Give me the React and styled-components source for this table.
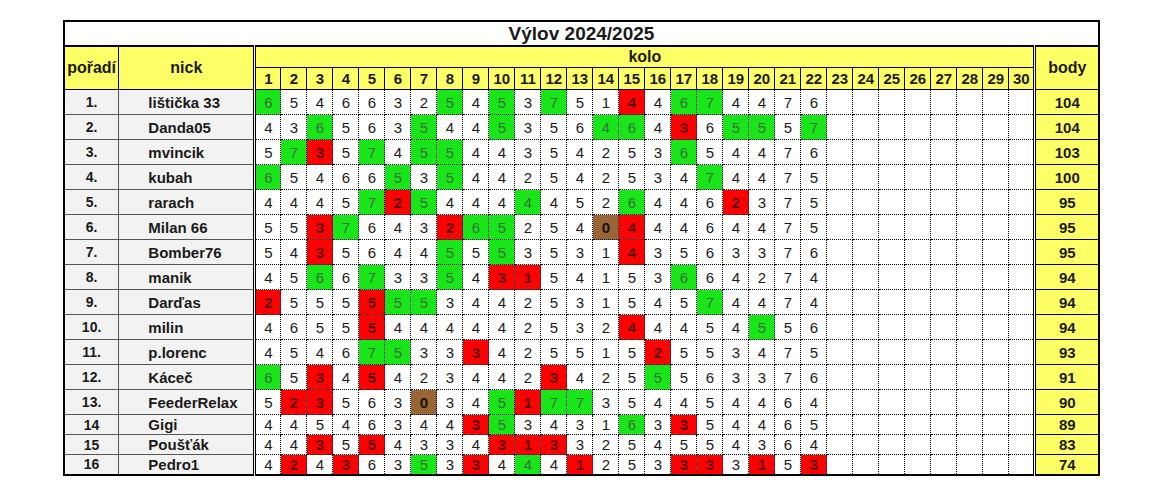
import styled, { createGlobalStyle } from "styled-components";

const GlobalStyle = createGlobalStyle`
  body {
    margin: 0;
    background: #ffffff;
    font-family: "Liberation Sans", Arial, sans-serif;
  }
`

const Page = styled.div`
  padding-top: 20px;
  display: flex;
  justify-content: center;
`
const Table = styled.table`
  width: 1036px;
  table-layout: fixed;
  border-collapse: collapse;
  border: 2px solid #000;
  color: #1a1a1a;
`
const TitleCell = styled.th`
  height: 23px;
  padding: 0;
  font-size: 19px;
  font-weight: bold;
  text-align: center;
  border-bottom: 2px solid #000;
  background: #fff;
`
const HeadCell = styled.th`
  padding: 0;
  background: #ffff66;
  font-size: 16px;
  font-weight: bold;
  border: 1px solid #000;
  border-left: ${(p) => (p.$double ? "3px double #000" : "1px solid #000")};
  border-right: ${(p) => (p.$doubleRight ? "3px double #000" : "1px solid #000")};
  vertical-align: middle;
`
const KoloCell = styled.th`
  height: 20px;
  padding: 0;
  background: #ffff66;
  font-size: 16px;
  font-weight: bold;
  border-bottom: 1px solid #000;
  line-height: 20px;
`
const NumHead = styled.th`
  height: 21px;
  padding: 0;
  background: #ffff66;
  font-size: 15px;
  font-weight: bold;
  border: 1px solid #000;
`
const Row = styled.tr`
  height: ${(p) => (p.$compact ? "20px" : "25px")};
`
const RankCell = styled.td`
  padding: 0;
  background: #f2f2f2;
  font-size: 14px;
  font-weight: bold;
  text-align: center;
  border: 1px solid #555;
`
const NickCell = styled.td`
  padding: 0 0 0 29px;
  background: #f2f2f2;
  font-size: 15px;
  font-weight: bold;
  text-align: left;
  white-space: nowrap;
  border: 1px solid #555;
  border-right: 3px double #000;
`

const tones = {
  g: { bg: "#19e619", fg: "#3b6b3b", weight: "normal" },
  r: { bg: "#ff0000", fg: "#5a0000", weight: "bold" },
  b: { bg: "#996633", fg: "#111111", weight: "bold" },
}

const RoundCell = styled.td`
  padding: 0;
  font-size: 15px;
  text-align: center;
  border: 1px dotted #000;
  background: ${(p) => (p.$tone ? tones[p.$tone].bg : "#fff")};
  color: ${(p) => (p.$tone ? tones[p.$tone].fg : "#1a1a1a")};
  font-weight: ${(p) => (p.$tone ? tones[p.$tone].weight : "normal")};
`
const PointsCell = styled.td`
  padding: 0;
  background: #ffff66;
  font-size: 15px;
  font-weight: bold;
  text-align: center;
  border: 1px solid #000;
  border-left: 3px double #000;
`

const players = [
  ["1.", "lištička 33", "6g 5 4 6 6 3 2 5g 4 5g 3 7g 5 1 4r 4 6g 7g 4 4 7 6", 104],
  ["2.", "Danda05", "4 3 6g 5 6 3 5g 4 4 5g 3 5 6 4g 6g 4 3r 6 5g 5g 5 7g", 104],
  ["3.", "mvincik", "5 7g 3r 5 7g 4 5g 5g 4 4 3 5 4 2 5 3 6g 5 4 4 7 6", 103],
  ["4.", "kubah", "6g 5 4 6 6 5g 3 5g 4 4 2 5 4 2 5 3 4 7g 4 4 7 5", 100],
  ["5.", "rarach", "4 4 4 5 7g 2r 5g 4 4 4 4g 4 5 2 6g 4 4 6 2r 3 7 5", 95],
  ["6.", "Milan 66", "5 5 3r 7g 6 4 3 2r 6g 5g 2 5 4 0b 4r 4 4 6 4 4 7 5", 95],
  ["7.", "Bomber76", "5 4 3r 5 6 4 4 5g 5 5g 3 5 3 1 4r 3 5 6 3 3 7 6", 95],
  ["8.", "manik", "4 5 6g 6 7g 3 3 5g 4 3r 1r 5 4 1 5 3 6g 6 4 2 7 4", 94],
  ["9.", "Darďas", "2r 5 5 5 5r 5g 5g 3 4 4 2 5 3 1 5 4 5 7g 4 4 7 4", 94],
  ["10.", "milin", "4 6 5 5 5r 4 4 4 4 4 2 5 3 2 4r 4 4 5 4 5g 5 6", 94],
  ["11.", "p.lorenc", "4 5 4 6 7g 5g 3 3 3r 4 2 5 5 1 5 2r 5 5 3 4 7 5", 93],
  ["12.", "Káceč", "6g 5 3r 4 5r 4 2 3 4 4 2 3r 4 2 5 5g 5 6 3 3 7 6", 91],
  ["13.", "FeederRelax", "5 2r 3r 5 6 3 0b 3 4 5g 1r 7g 7g 3 5 4 4 5 4 4 6 4", 90],
  ["14", "Gigi", "4 4 5 4 6 3 4 4 3r 5g 3 4 3 1 6g 3 3r 5 4 4 6 5", 89],
  ["15", "Poušťák", "4 4 3r 5 5r 4 3 3 4 3r 1r 3r 3 2 5 4 5 5 4 3 6 4", 83],
  ["16", "Pedro1", "4 2r 4 3r 6 3 5g 3 3r 4 4g 4 1r 2 5 3 3r 3r 3 1r 5 3r", 74],
]

const ROUNDS = 30
const rounds = Array.from({ length: ROUNDS }, (_, i) => i + 1)

function parseScores(text) {
  const cells = text.split(" ").map((s) => ({ value: s[0], tone: s[1] }))
  while (cells.length < ROUNDS) cells.push({ value: "", tone: undefined })
  return cells
}

function App() {
  return (
    <>
      <GlobalStyle />
      <Page>
        <Table>
          <colgroup>
            <col style={{ width: 55 }} />
            <col style={{ width: 136 }} />
            {rounds.map((n) => (
              <col key={n} style={{ width: 26 }} />
            ))}
            <col style={{ width: 64 }} />
          </colgroup>
          <thead>
            <tr>
              <TitleCell colSpan={ROUNDS + 3}>Výlov 2024/2025</TitleCell>
            </tr>
            <tr>
              <HeadCell rowSpan={2}>pořadí</HeadCell>
              <HeadCell rowSpan={2} $doubleRight>nick</HeadCell>
              <KoloCell colSpan={ROUNDS}>kolo</KoloCell>
              <HeadCell rowSpan={2} $double>body</HeadCell>
            </tr>
            <tr>
              {rounds.map((n) => (
                <NumHead key={n}>{n}</NumHead>
              ))}
            </tr>
          </thead>
          <tbody>
            {players.map(([rank, nick, scores, points], i) => (
              <Row key={nick} $compact={i >= 13}>
                <RankCell>{rank}</RankCell>
                <NickCell>{nick}</NickCell>
                {parseScores(scores).map((c, j) => (
                  <RoundCell key={j} $tone={c.tone}>{c.value}</RoundCell>
                ))}
                <PointsCell>{points}</PointsCell>
              </Row>
            ))}
          </tbody>
        </Table>
      </Page>
    </>
  );
}

export default App;
